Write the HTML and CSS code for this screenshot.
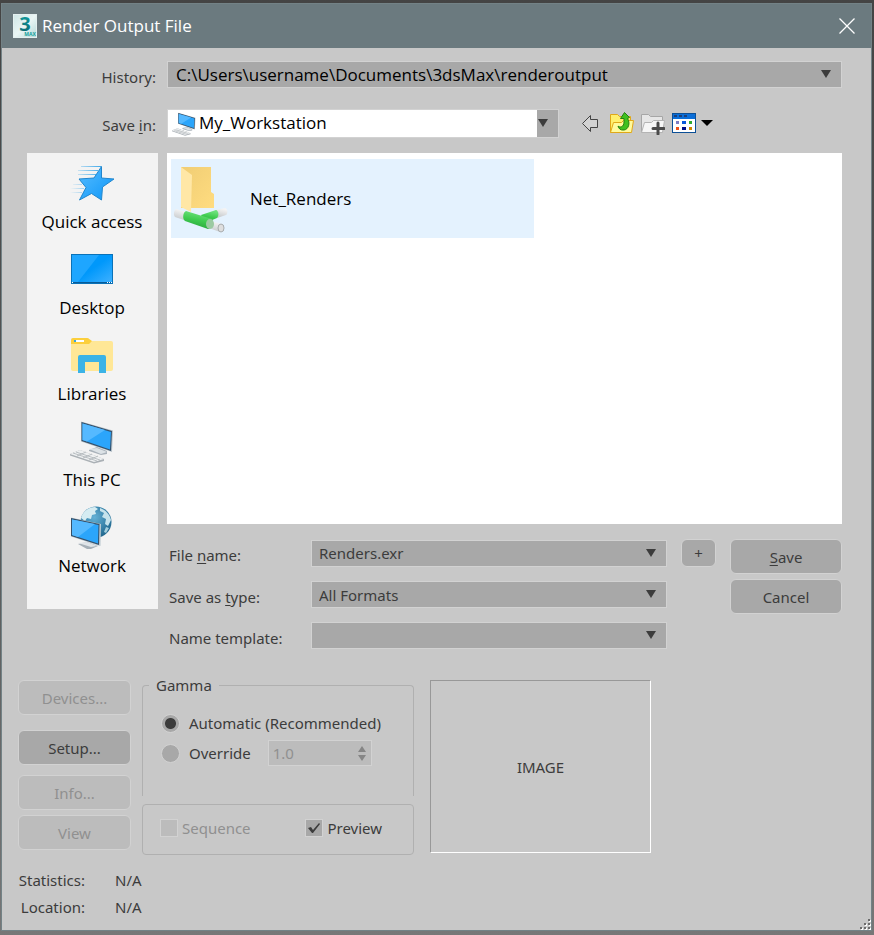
FILE: index.html
```
<!DOCTYPE html>
<html lang="en">
<head>
  <meta charset="UTF-8" />
  <meta name="viewport" content="width=device-width, initial-scale=1.0" />
  <title>Render Output File</title>
  <link rel="stylesheet" href="styles.css">
</head>
<body>
  <div class="window">
    <header class="titlebar">
      <svg class="logo" viewBox="0 0 24 24" width="24" height="24" aria-hidden="true">
        <defs>
          <linearGradient id="logoBg" x1="0" y1="0" x2="1" y2="1">
            <stop offset="0" stop-color="#cfe6e6" />
            <stop offset="0.5" stop-color="#eaf6f5" />
            <stop offset="1" stop-color="#b4dad9" />
          </linearGradient>
          <linearGradient id="logoInk" x1="0" y1="0" x2="0" y2="1">
            <stop offset="0" stop-color="#12a7a6" />
            <stop offset="1" stop-color="#0a5f6b" />
          </linearGradient>
        </defs>
        <rect x="0.5" y="0.5" width="23" height="23" fill="url(#logoBg)" stroke="#e4f0f0" />
        <text class="logo-digit" x="12" y="17" text-anchor="middle" fill="url(#logoInk)">3</text>
        <text class="logo-word" x="17" y="22" text-anchor="middle">MAX</text>
      </svg>
      <h1>Render Output File</h1>
      <button class="close" type="button" aria-label="Close">
        <svg viewBox="0 0 16 16" width="16" height="16"><path d="M0.5 0.5l15 15M15.5 0.5l-15 15" stroke="#fff" stroke-width="1.3" /></svg>
      </button>
    </header>

    <form class="content">
      <div class="top-row">
        <label for="history">History:</label>
        <select id="history" class="combo history">
          <option>C:\Users\username\Documents\3dsMax\renderoutput</option>
        </select>
      </div>

      <div class="top-row save-in">
        <label for="saveIn">Save <u>i</u>n:</label>
        <div class="place-select">
          <svg viewBox="0 0 44 44" width="24" height="24" aria-hidden="true"><use href="#pc" /></svg>
          <select id="saveIn">
            <option>My_Workstation</option>
          </select>
        </div>
        <div class="toolbar">
          <button type="button" aria-label="Back">
            <svg viewBox="0 0 24 24" width="24" height="24"><path d="M3.500 12.500L11.500 4.500V8.500H18.500V16.500H11.500V20.500Z" fill="#d2d2d2" stroke="#444" stroke-linejoin="round" /></svg>
          </button>
          <button type="button" aria-label="Up one level">
            <svg viewBox="0 0 24 24" width="24" height="24">
              <path d="M0.500 21.500V3.500H7.500L9.500 5.500H20.500V21.500Z" fill="#fff06e" stroke="#e0a818" />
              <path d="M0.500 21.500L3.500 11.500H11.500L13.500 9.500H23.500L21.500 21.500Z" fill="#fffa9c" stroke="#e0a818" />
              <path d="M8 15C10 17 14 16 14 11V7.500H10.500L14.500 1.500L19.500 6.500L17.500 7.500C20.500 12 18.500 18.500 14 19C10.500 19.500 8.500 17.500 8 15Z" fill="#3fc01e" stroke="#23800f" />
            </svg>
          </button>
          <button type="button" aria-label="Create new folder">
            <svg viewBox="0 0 24 24" width="24" height="24">
              <path d="M0.500 21.500V3.500H7.500L9.500 5.500H21.500V21.500Z" fill="#e6e6e6" stroke="#a6a6a6" />
              <path d="M0.500 21.500L3.500 11.500H10.500L12.500 9.500H23.500L21.500 21.500Z" fill="#f6f6f6" stroke="#b4b4b4" />
              <path d="M17 12v11M12 17.500h11" stroke="#4a4a4a" stroke-width="3" stroke-linecap="round" />
            </svg>
          </button>
          <button class="view-menu" type="button" aria-label="View menu">
            <svg viewBox="0 0 24 24" width="24" height="24">
              <rect x="0.500" y="2.500" width="23" height="19" fill="#fff" stroke="#0b4f96" />
              <path d="M1 3h22v5H1z" fill="#0a6ed8" />
              <path d="M2 4h3v2H2zM7 4h3v2H7zM12 4h3v2h-3z" fill="#1c3f78" />
              <path d="M4 10h3v3H4z" fill="#7c7cc4" />
              <path d="M10 10h4v3h-4z" fill="#0a58dc" />
              <path d="M17 10h3v3h-3z" fill="#2fa82f" />
              <path d="M4 16h3v3H4z" fill="#f0501a" />
              <path d="M10 16h4v3h-4z" fill="#000c86" />
              <path d="M17 16h3v3h-3z" fill="#d08600" />
            </svg>
            <svg viewBox="0 0 12 6" width="12" height="6"><path d="M0 0h12L6 6z" fill="#000" /></svg>
          </button>
        </div>
      </div>

      <div class="browser">
        <nav class="places">
          <a href="#">
            <svg viewBox="0 0 44 44" width="44" height="44" aria-hidden="true">
              <defs>
                <linearGradient id="starFill" x1="0" y1="0" x2="1" y2="1">
                  <stop offset="0" stop-color="#58bdff" />
                  <stop offset="1" stop-color="#0c96f8" />
                </linearGradient>
                <linearGradient id="trail">
                  <stop offset="0" stop-color="#3fa9ea" stop-opacity="0" />
                  <stop offset="1" stop-color="#3fa9ea" />
                </linearGradient>
              </defs>
              <path d="M11 4.500h20M8 8.500h20M8 12.500h18M3 22.500h9M0 26.500h14M0 30.500h12" stroke="url(#trail)" />
              <path d="M31.500 4.500V16L44 17L32.500 25L31.500 38L21.500 31.500L9.500 38L16 25.500L9 17L24 16Z" fill="url(#starFill)" stroke="#2186cd" stroke-linejoin="round" />
            </svg>
            Quick access
          </a>
          <a href="#">
            <svg viewBox="0 0 44 44" width="44" height="44" aria-hidden="true">
              <defs>
                <linearGradient id="deskFill" x1="0" y1="0" x2="1" y2="1">
                  <stop offset="0.500" stop-color="#0098fb" />
                  <stop offset="1" stop-color="#42b2ff" />
                </linearGradient>
              </defs>
              <rect x="1.500" y="6.500" width="41" height="29" fill="url(#deskFill)" stroke="#0a72b8" />
              <path d="M2 7h27L8 34H2z" fill="#1ea6ff" />
              <path d="M2 34h40v1H2z" fill="#075b99" />
              <path d="M2 34h1v1H2zM37 34h1v1h-1zM39 34h1v1h-1zM41 34h1v1h-1z" fill="#fff" />
            </svg>
            Desktop
          </a>
          <a href="#">
            <svg viewBox="0 0 44 44" width="44" height="44" aria-hidden="true">
              <path d="M1 9a2 2 0 0 1 2-2H41a2 2 0 0 1 2 2V35a2 2 0 0 1-2 2H3a2 2 0 0 1-2-2Z" fill="#ffe796" />
              <path d="M1 6a2 2 0 0 1 2-2H17c2 0 3 2 5 3l-3 3H1Z" fill="#fccf3c" />
              <path d="M4 6h10v2H4z" fill="#fff" />
              <path d="M4 6h2v2H4z" fill="#3ba6dc" />
              <path d="M8 39V23a2 2 0 0 1 2-2H34a2 2 0 0 1 2 2V39H29V28H15V39Z" fill="#3bb3e6" />
            </svg>
            Libraries
          </a>
          <a href="#">
            <svg viewBox="0 0 44 44" width="44" height="44" aria-hidden="true">
              <defs>
                <g id="pc">
                  <path d="M19 30l8-3 10 4v3l-6 1-12-4z" fill="#a9b2ba" />
                  <path d="M19 29l8-1 10 4-6 2z" fill="#dce2e6" />
                  <path d="M11 1.500L43 10.500L42 32L39 31L11 21.500Z" fill="#b9c4cb" />
                  <path d="M11.500 2L42 11L41 31L11.500 21Z" fill="#35506a" />
                  <path d="M12.500 3.500L41 12L40 29.500L12.500 20Z" fill="#2ba5fb" />
                  <path d="M12.500 3.500L35 10L17 21.500L12.500 20Z" fill="#55b9ff" />
                  <path d="M0 34L10 30L34 39V41L24 43.500L0 35.500Z" fill="#aab0b5" />
                  <path d="M0 34L10 30L34 39L24 42Z" fill="#eef0f1" />
                  <path d="M3 33l24 8M6 32l24 8M7 36l9-4M13 38l9-4M19 40l9-4" stroke="#a4aaaf" stroke-width="0.700" />
                </g>
              </defs>
              <use href="#pc" />
            </svg>
            This PC
          </a>
          <a href="#">
            <svg viewBox="0 0 44 44" width="44" height="44" aria-hidden="true">
              <defs>
                <radialGradient id="globeFill" cx="0.450" cy="0.350" r="0.650">
                  <stop offset="0" stop-color="#63b1d6" />
                  <stop offset="1" stop-color="#21688f" />
                </radialGradient>
              </defs>
              <circle cx="26" cy="16" r="15.500" fill="url(#globeFill)" />
              <path d="M11 12C13 5 19 1 25 1L28 3L25 5L26 8L22 9L21 13L17 12L15 15Z" fill="#d5ecf2" />
              <path d="M30 2C36 4 40 9 41 14L38 20L35 18L36 13L32 11L34 7L30 5Z" fill="#c5e3ec" />
              <path d="M36 21l3 1-3 5-2-1z" fill="#a3cedd" />
              <path d="M8 38l9-2 11 4-7 3-4 0z" fill="#a5afb7" />
              <path d="M8 37l9-1 10 4-6 1z" fill="#dfe4e8" />
              <path d="M1 11.500L31 18L30.500 40L28 39.500L1 30.500Z" fill="#becad1" />
              <path d="M1 12L29.500 18L29 39L1 30Z" fill="#35506a" />
              <path d="M2 13.500L28.500 19L28 37.500L2 29Z" fill="#2ba5fb" />
              <path d="M2 13.500L25 18L8 31L2 29Z" fill="#55b9ff" />
            </svg>
            Network
          </a>
        </nav>

        <div class="main">
          <div class="file-list">
            <button class="file-item" type="button">
              <svg viewBox="0 0 56 68" width="56" height="68" aria-hidden="true">
                <defs>
                  <linearGradient id="folderFill" x1="0" y1="0" x2="1" y2="1">
                    <stop offset="0" stop-color="#f0cd74" />
                    <stop offset="1" stop-color="#ffdc80" />
                  </linearGradient>
                  <linearGradient id="pipe" x1="0.300" y1="0" x2="0" y2="1">
                    <stop offset="0" stop-color="#6be07a" />
                    <stop offset="0.400" stop-color="#3fcc50" />
                    <stop offset="1" stop-color="#239a36" />
                  </linearGradient>
                  <linearGradient id="tube" x1="0.300" y1="0" x2="0" y2="1">
                    <stop offset="0" stop-color="#f4f4f4" />
                    <stop offset="1" stop-color="#bfc3c6" />
                  </linearGradient>
                </defs>
                <path d="M8 2H38V27L41 29V43H8Z" fill="url(#folderFill)" />
                <path d="M8 2L19 10L18 47L8 42Z" fill="#ffe7a6" />
                <path d="M3 44L13 47L11 55L2 52C0 50 1 45 3 44Z" fill="url(#tube)" />
                <path d="M43 45L52 43C55 44 55 48 53 50L44 53Z" fill="url(#tube)" />
                <path d="M37 56L49 59L47 67L36 63Z" fill="url(#tube)" />
                <path d="M28 50L43 45C46 46 46 51 44 53L32 58Z" fill="url(#pipe)" />
                <path d="M13 46L39 54C41 57 39 63 35 64L12 56C9 54 10 47 13 46Z" fill="url(#pipe)" />
                <ellipse cx="37" cy="59" rx="4" ry="5" fill="#9ccaa2" />
                <ellipse cx="48" cy="63" rx="3" ry="4" fill="#dedede" stroke="#a8acae" />
              </svg>
              Net_Renders
            </button>
          </div>

          <div class="fields">
            <div class="field-grid">
              <label for="fileName">File <u>n</u>ame:</label>
              <select id="fileName" class="combo">
                <option>Renders.exr</option>
              </select>
              <button class="btn plus" type="button">+</button>

              <label for="fileType">Save as <u>t</u>ype:</label>
              <select id="fileType" class="combo">
                <option>All Formats</option>
              </select>

              <label for="template">Name template:</label>
              <select id="template" class="combo">
                <option></option>
              </select>
            </div>
            <div class="actions">
              <button class="btn" type="submit"><u>S</u>ave</button>
              <button class="btn" type="button">Cancel</button>
            </div>
          </div>
        </div>
      </div>

      <div class="options">
        <div class="tools">
          <button class="btn" type="button" disabled>Devices...</button>
          <button class="btn setup" type="button">Setup...</button>
          <button class="btn" type="button" disabled>Info...</button>
          <button class="btn" type="button" disabled>View</button>
        </div>

        <div class="groups">
          <fieldset class="gamma">
            <legend>Gamma</legend>
            <label class="choice"><input type="radio" name="gamma" checked> Automatic (Recommended)</label>
            <div class="override">
              <label class="choice"><input type="radio" name="gamma"> Override</label>
              <input class="spinner" type="number" value="1.0" step="0.1" aria-label="Gamma override" disabled>
            </div>
          </fieldset>
          <div class="checks">
            <label class="check off"><input type="checkbox" disabled> Sequence</label>
            <label class="check"><input type="checkbox" checked> Preview</label>
          </div>
        </div>

        <div class="preview">IMAGE</div>
      </div>

      <dl class="info">
        <dt>Statistics:</dt>
        <dd>N/A</dd>
        <dt>Location:</dt>
        <dd>N/A</dd>
      </dl>
    </form>

    <svg class="grip" viewBox="0 0 11 11" width="11" height="11" aria-hidden="true">
      <path d="M9 1h2v2H9zM5 5h2v2H5zM9 5h2v2H9zM1 9h2v2H1zM5 9h2v2H5zM9 9h2v2H9z" fill="#fff" />
      <path d="M8 0h2v2H8zM4 4h2v2H4zM8 4h2v2H8zM0 8h2v2H0zM4 8h2v2H4zM8 8h2v2H8z" fill="#6c6c6c" />
    </svg>
  </div>
</body>
</html>
```
FILE: styles.css
```
* {
  box-sizing: border-box;
  margin: 0;
  padding: 0;
}

body {
  display: flex;
  min-height: 100vh;
  padding: 3px 2px 4px 1px;
  background: linear-gradient(#444, #5a5c5c 60%, #777);
  color: #3c3c3c;
  font-family: "Noto Sans", "Open Sans", sans-serif;
  font-size: 15px;
  line-height: 24px;
}

button, select, input {
  color: inherit;
  font: inherit;
}

button {
  border: none;
  background: none;
  cursor: pointer;
}

svg {
  display: block;
  fill: none;
}

u {
  text-underline-offset: 2px;
}

.window {
  position: relative;
  flex: 1;
  min-width: 0;
  border: 1px solid #738286;
  background: #c8c8c8;
}

.titlebar {
  display: flex;
  align-items: center;
  gap: 5px;
  height: 44px;
  padding: 0 16px 0 11px;
  background: #6b7a7f;
  color: #fff;
}

.titlebar h1 {
  flex: 1;
  font: 17px/24px "Open Sans", sans-serif;
}

.logo {
  overflow: visible;
}

.logo-digit {
  font: bold 20px "Open Sans", sans-serif;
}

.logo-word {
  fill: #13a09c;
  font: bold 5px "Open Sans", sans-serif;
}

.content {
  padding: 13px 29px 0 25px;
}

/* path rows */
.top-row {
  display: flex;
  margin-bottom: 20px;
}

.top-row > label {
  width: 140px;
  padding: 4px 11px 0 0;
  text-align: right;
}

.top-row.save-in {
  margin-bottom: 15px;
}

.combo {
  width: 100%;
  height: 27px;
  padding: 0 32px 0 7px;
  border: 1px solid #d2d2d2;
  border-radius: 0;
  appearance: none;
  background: #a8a8a8 url("data:image/svg+xml,%3Csvg xmlns='http://www.w3.org/2000/svg' width='10' height='8'%3E%3Cpath d='M0 0h10L5 8z' fill='%233c3c3c'/%3E%3C/svg%3E") no-repeat right 10px top 8px;
}

.history {
  flex: 1;
  min-width: 0;
  padding-left: 8px;
  color: #000;
  font: 17px "Open Sans", sans-serif;
}

.place-select {
  display: flex;
  flex: 0 1 392px;
  align-items: center;
  height: 29px;
  padding-left: 4px;
  border: 1px solid #d2d2d2;
  background: #fff;
}

.place-select select {
  flex: 1;
  min-width: 0;
  height: 27px;
  padding: 0 24px 2px 3px;
  border: none;
  appearance: none;
  background:
    url("data:image/svg+xml,%3Csvg xmlns='http://www.w3.org/2000/svg' width='10' height='8'%3E%3Cpath d='M0 0h10L5 8z' fill='%233c3c3c'/%3E%3C/svg%3E") no-repeat right 10px top 9px,
    linear-gradient(#a8a8a8, #a8a8a8) no-repeat right / 21px 100%,
    #fff;
  color: #000;
  font: 17px "Open Sans", sans-serif;
}

.toolbar {
  display: flex;
  align-items: center;
  gap: 7px;
  margin-left: 20px;
  padding-bottom: 2px;
}

.view-menu {
  display: flex;
  align-items: center;
  gap: 5px;
}

/* places bar and file list */
.browser {
  display: flex;
  align-items: flex-start;
  gap: 9px;
}

.places {
  display: flex;
  flex: 0 0 131px;
  flex-direction: column;
  gap: 14px;
  padding: 9px 1px 31px 0;
  background: #f3f3f3;
}

.places a {
  display: flex;
  flex-direction: column;
  align-items: center;
  gap: 4px;
  color: #000;
  font: 17px/24px "Open Sans", sans-serif;
  text-decoration: none;
}

.main {
  flex: 1;
  min-width: 0;
}

.file-list {
  min-height: 371px;
  padding: 6px 4px;
  background: #fff;
}

.file-item {
  display: flex;
  align-items: center;
  gap: 21px;
  width: 363px;
  max-width: 100%;
  height: 79px;
  padding: 0 2px;
  background: #e4f2fe;
  color: #000;
  font: 17px/24px "Open Sans", sans-serif;
}

.fields {
  display: flex;
  gap: 14px;
  padding-top: 15px;
}

.field-grid {
  display: grid;
  flex: 1;
  grid-template-columns: 130px 1fr 35px;
  gap: 14px;
  align-items: center;
}

.field-grid label {
  grid-column: 1;
  padding: 4px 0 0 2px;
  line-height: 22px;
}

.actions {
  display: flex;
  flex: 0 0 112px;
  flex-direction: column;
  gap: 5px;
}

.btn {
  height: 35px;
  border: 1px solid #d2d2d2;
  border-radius: 6px;
  background: #a8a8a8;
}

.btn:disabled {
  background: #bcbcbc;
  color: #909090;
  cursor: default;
}

.plus {
  height: 28px;
}

/* lower section */
.options {
  display: flex;
  align-items: flex-start;
  margin: 24px 0 0 -9px;
}

.tools {
  display: flex;
  flex: 0 0 113px;
  flex-direction: column;
  gap: 5px;
  padding-top: 7px;
}

.setup {
  margin: 10px 0 5px;
}

.groups {
  flex: 0 0 272px;
  margin: 0 16px 0 11px;
}

.gamma {
  height: 123px;
  padding: 11px 18px 0;
  border: 1px solid #b0b0b0;
  border-bottom: none;
  border-radius: 4px 4px 0 0;
}

.gamma legend {
  margin-left: -12px;
  padding: 0 7px;
}

.choice {
  display: flex;
  align-items: center;
  gap: 9px;
  height: 30px;
}

.choice input {
  width: 19px;
  height: 19px;
  border: 1px solid #d2d2d2;
  border-radius: 50%;
  appearance: none;
  background: #a8a8a8;
}

.choice input:checked {
  background: radial-gradient(circle, #3c3c3c 5px, #a8a8a8 6px);
}

.override {
  display: flex;
  align-items: center;
  gap: 17px;
}

.spinner {
  width: 104px;
  height: 26px;
  padding: 0 24px 0 4px;
  border: 1px solid #d2d2d2;
  appearance: textfield;
  background: #bcbcbc url("data:image/svg+xml,%3Csvg xmlns='http://www.w3.org/2000/svg' width='8' height='15'%3E%3Cpath d='M0 6h8L4 0zM0 9h8L4 15z' fill='%23858585'/%3E%3C/svg%3E") no-repeat right 5px center;
  color: #909090;
}

.spinner::-webkit-inner-spin-button {
  display: none;
}

.checks {
  display: flex;
  align-items: center;
  justify-content: space-between;
  height: 51px;
  margin-top: 8px;
  padding: 0 31px 3px 17px;
  border: 1px solid #b0b0b0;
  border-radius: 4px;
}

.check {
  display: flex;
  align-items: center;
  gap: 4px;
}

.check input {
  width: 18px;
  height: 18px;
  border: 1px solid #d2d2d2;
  appearance: none;
  background: #a8a8a8;
}

.check input:checked {
  background: #a8a8a8 url("data:image/svg+xml,%3Csvg xmlns='http://www.w3.org/2000/svg' width='12' height='11'%3E%3Cpath d='M0 5l3-1 2 3 6-7 1 1-7 9H4z' fill='%233c3c3c'/%3E%3C/svg%3E") no-repeat center;
}

.check.off {
  color: #909090;
}

.check.off input {
  background: #bcbcbc;
}

.preview {
  display: flex;
  align-items: center;
  justify-content: center;
  flex: 0 1 221px;
  height: 173px;
  margin-top: 7px;
  border: 1px solid;
  border-color: #989898 #fff #fff #989898;
}

.info {
  display: grid;
  grid-template-columns: 67px auto;
  column-gap: 30px;
  margin: 12px 0 0 -9px;
  line-height: 27px;
}

.info dt {
  text-align: right;
}

.grip {
  position: absolute;
  right: 0;
  bottom: 0;
}
```
